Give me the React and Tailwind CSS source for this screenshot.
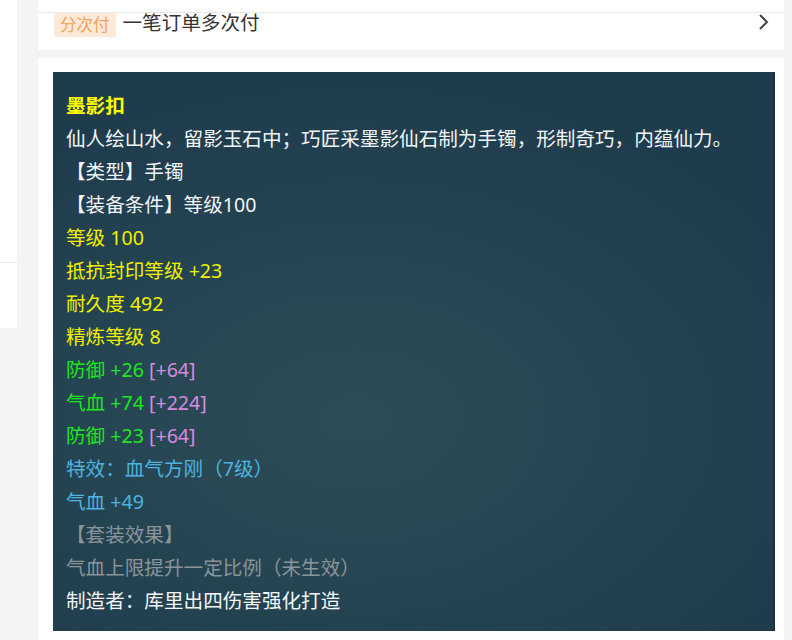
import React from "react";

const F = { fontFamily: '"Noto Sans", "Noto Sans CJK SC", sans-serif' };

function Line({ children, className = "" }) {
  return <div className={`h-[33px] leading-[33px] whitespace-nowrap ${className}`}>{children}</div>;
}

export default function App() {
  return (
    <div className="w-[792px] h-[640px] overflow-hidden bg-[#f4f4f4] flex" style={F}>
      {/* left column */}
      <div className="w-[17px] shrink-0 flex flex-col">
        <div className="h-[262px] bg-white"></div>
        <div className="h-px bg-[#e6e6e6]"></div>
        <div className="h-[65px] bg-white"></div>
      </div>
      <div className="w-[21px] shrink-0"></div>
      {/* main column */}
      <div className="w-[746px] shrink-0 flex flex-col">
        <div className="h-[50px] bg-white flex flex-col">
          <div className="h-[12px]"></div>
          <div className="h-px bg-[#e8e8e8]"></div>
          <div className="flex-1 flex items-start pl-[16px] pr-[14px]">
            <span className="h-[24px] px-[6px] rounded-[3px] bg-[#fde9d8] text-[#f2a35e] text-[16.5px] leading-[24px]">分次付</span>
            <span className="ml-[7px] -mt-[1px] text-[19.6px] leading-[22px] text-[#333]">一笔订单多次付</span>
            <svg className="ml-auto" width="14" height="18" viewBox="0 0 14 18">
              <path d="M4 2 L11 9 L4 16" fill="none" stroke="#444" strokeWidth="2" />
            </svg>
          </div>
        </div>
        <div className="h-[8px]"></div>
        <div className="flex-1 bg-white pt-[14px] pl-[15px] pr-[9px]">
          <div className="h-[559px] border-r-2 border-[#1a3142] bg-[radial-gradient(ellipse_70%_60%_at_42%_62%,#2c4e57_0%,#264653_45%,#1f3c4d_100%)] pl-[13px] pt-[17px] text-[19.6px]">
            <Line className="font-bold text-[#ffff00]">墨影扣</Line>
            <Line className="text-[#f2f6f8]">仙人绘山水，留影玉石中；巧匠采墨影仙石制为手镯，形制奇巧，内蕴仙力。</Line>
            <Line className="text-[#f2f6f8]">【类型】手镯</Line>
            <Line className="text-[#f2f6f8]">【装备条件】等级100</Line>
            <Line className="text-[#f0f000]">等级 100</Line>
            <Line className="text-[#f0f000]">抵抗封印等级 +23</Line>
            <Line className="text-[#f0f000]">耐久度 492</Line>
            <Line className="text-[#f0f000]">精炼等级 8</Line>
            <Line className="text-[#1ee61e]">防御 +26 <span className="text-[#d98ae0]">[+64]</span></Line>
            <Line className="text-[#1ee61e]">气血 +74 <span className="text-[#d98ae0]">[+224]</span></Line>
            <Line className="text-[#1ee61e]">防御 +23 <span className="text-[#d98ae0]">[+64]</span></Line>
            <Line className="text-[#4fb3e0]">特效：血气方刚（7级）</Line>
            <Line className="text-[#4fb3e0]">气血 +49</Line>
            <Line className="text-[#8a9499]">【套装效果】</Line>
            <Line className="text-[#8a9499]">气血上限提升一定比例（未生效）</Line>
            <Line className="text-[#f2f6f8]">制造者：库里出四伤害强化打造</Line>
          </div>
        </div>
      </div>
    </div>
  );
}
